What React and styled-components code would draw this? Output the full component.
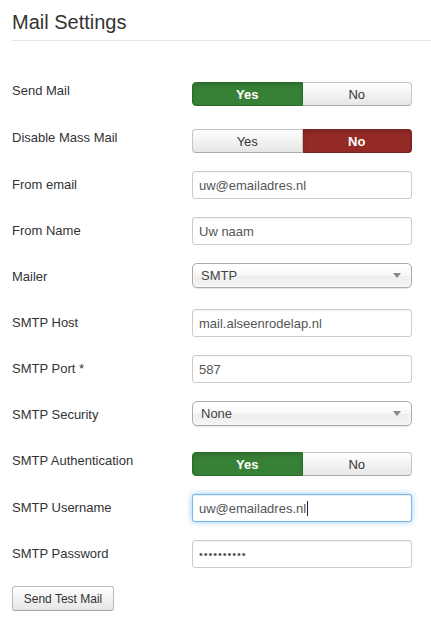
import React from 'react';
import styled, { createGlobalStyle, css } from 'styled-components';

const Global = createGlobalStyle`
  body {
    margin: 0;
    background: #fff;
    font-family: "Liberation Sans", Arial, sans-serif;
    color: #333;
  }
`;

const Page = styled.div`
  padding-left: 12px;
`;

const Heading = styled.h2`
  margin: 9px 0 0;
  padding-bottom: 4px;
  font-size: 20px;
  line-height: 27px;
  font-weight: normal;
  color: #333;
  border-bottom: 1px solid #e3e3e3;
`;

const Form = styled.div`
  margin-top: 36px;
  display: flex;
  flex-direction: column;
  gap: 18px;
`;

const Row = styled.div`
  display: flex;
  align-items: flex-start;
  min-height: 28px;
`;

const Label = styled.div`
  width: 180px;
  flex-shrink: 0;
  padding-top: 5px;
  font-size: 13px;
  line-height: 18px;
  color: #333;
`;

const Toggle = styled.div`
  display: flex;
  width: 220px;
  height: 24px;
  margin-top: 5px;
`;

const ToggleBtn = styled.div`
  flex: 1;
  display: flex;
  align-items: center;
  justify-content: center;
  font-size: 13px;
  color: #333;
  border: 1px solid #c4c4c4;
  border-bottom-color: #aaa;
  background: linear-gradient(#fff, #e6e6e6);
  box-shadow: inset 0 1px 0 rgba(255, 255, 255, 0.3);
  &:first-child {
    border-radius: 4px 0 0 4px;
  }
  &:last-child {
    border-radius: 0 4px 4px 0;
    border-left: none;
  }
  ${(p) =>
    p.$tone === 'yes' &&
    css`
      background: #378137;
      border-color: #2c6a2c;
      color: #fff;
      font-weight: bold;
      box-shadow: inset 0 2px 4px rgba(0, 0, 0, 0.15);
    `}
  ${(p) =>
    p.$tone === 'no' &&
    css`
      background: #942a25;
      border-color: #7a221e;
      color: #fff;
      font-weight: bold;
      box-shadow: inset 0 2px 4px rgba(0, 0, 0, 0.15);
    `}
`;

const Field = styled.div`
  box-sizing: border-box;
  width: 220px;
  height: 28px;
  padding: 0 6px;
  display: flex;
  align-items: center;
  font-size: 13px;
  color: #555;
  background: #fff;
  border: 1px solid #ccc;
  border-radius: 3px;
  box-shadow: inset 0 1px 1px rgba(0, 0, 0, 0.05);
  ${(p) =>
    p.$focused &&
    css`
      border-color: rgba(82, 168, 236, 0.8);
      box-shadow: inset 0 1px 1px rgba(0, 0, 0, 0.075),
        0 0 6px rgba(82, 168, 236, 0.6);
    `}
`;

const Caret = styled.span`
  display: inline-block;
  width: 1px;
  height: 15px;
  margin-left: 1px;
  background: #222;
`;

const Dots = styled.span`
  font-size: 11px;
  letter-spacing: 0.9px;
  color: #555;
`;

const Select = styled.div`
  box-sizing: border-box;
  width: 220px;
  height: 25px;
  padding: 0 10px 0 8px;
  display: flex;
  align-items: center;
  justify-content: space-between;
  font-size: 13px;
  color: #444;
  border: 1px solid #aaa;
  border-radius: 5px;
  background: linear-gradient(#fff 20%, #f6f6f6 50%, #eee 52%, #f4f4f4 100%);
  box-shadow: inset 0 0 3px #fff, 0 1px 1px rgba(0, 0, 0, 0.1);
`;

const Arrow = styled.span`
  width: 0;
  height: 0;
  border-left: 4px solid transparent;
  border-right: 4px solid transparent;
  border-top: 5px solid #888;
`;

const Button = styled.button`
  align-self: flex-start;
  height: 25px;
  width: 102px;
  padding: 0;
  font-family: "Liberation Sans", Arial, sans-serif;
  font-size: 12px;
  color: #333;
  border: 1px solid #bbb;
  border-bottom-color: #a2a2a2;
  border-radius: 3px;
  background: linear-gradient(#fff, #e6e6e6);
  box-shadow: inset 0 1px 0 rgba(255, 255, 255, 0.2), 0 1px 2px rgba(0, 0, 0, 0.05);
`;

function YesNo({ value }) {
  return (
    <Toggle>
      <ToggleBtn $tone={value === 'yes' ? 'yes' : null}>Yes</ToggleBtn>
      <ToggleBtn $tone={value === 'no' ? 'no' : null}>No</ToggleBtn>
    </Toggle>
  );
}

function Dropdown({ children }) {
  return (
    <Select>
      <span>{children}</span>
      <Arrow />
    </Select>
  );
}

export default function App() {
  return (
    <Page>
      <Global />
      <Heading>Mail Settings</Heading>
      <Form>
        <Row>
          <Label>Send Mail</Label>
          <YesNo value='yes' />
        </Row>
        <Row>
          <Label>Disable Mass Mail</Label>
          <YesNo value='no' />
        </Row>
        <Row>
          <Label>From email</Label>
          <Field>uw@emailadres.nl</Field>
        </Row>
        <Row>
          <Label>From Name</Label>
          <Field>Uw naam</Field>
        </Row>
        <Row>
          <Label>Mailer</Label>
          <Dropdown>SMTP</Dropdown>
        </Row>
        <Row>
          <Label>SMTP Host</Label>
          <Field>mail.alseenrodelap.nl</Field>
        </Row>
        <Row>
          <Label>SMTP Port *</Label>
          <Field>587</Field>
        </Row>
        <Row>
          <Label>SMTP Security</Label>
          <Dropdown>None</Dropdown>
        </Row>
        <Row>
          <Label>SMTP Authentication</Label>
          <YesNo value='yes' />
        </Row>
        <Row>
          <Label>SMTP Username</Label>
          <Field $focused>
            uw@emailadres.nl
            <Caret />
          </Field>
        </Row>
        <Row>
          <Label>SMTP Password</Label>
          <Field>
            <Dots>••••••••••</Dots>
          </Field>
        </Row>
        <Button>Send Test Mail</Button>
      </Form>
    </Page>
  );
}
